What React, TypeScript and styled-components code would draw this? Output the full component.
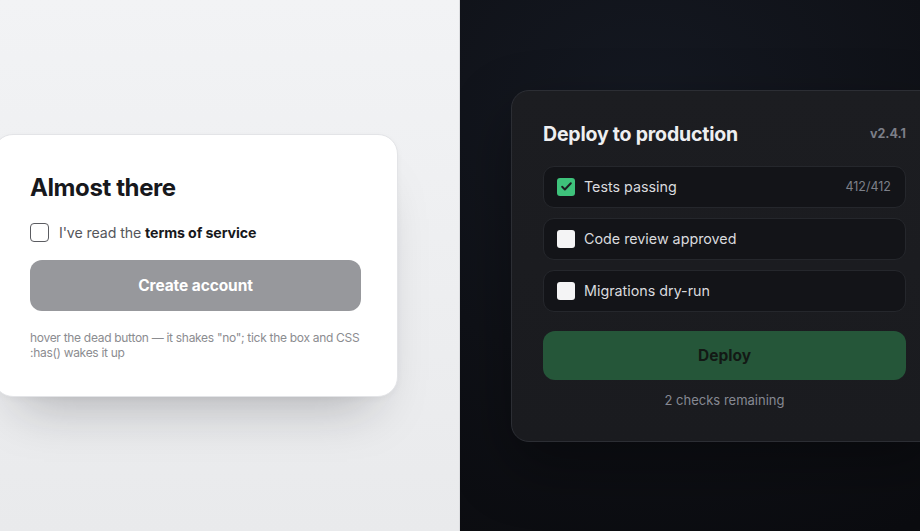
import React from 'react';
import styled, { createGlobalStyle } from 'styled-components';

const GlobalStyle = createGlobalStyle`
  html, body {
    margin: 0;
    padding: 0;
    overflow: hidden;
  }
  body {
    font-family: Inter, "Liberation Sans", sans-serif;
    -webkit-font-smoothing: antialiased;
  }
`;

const Split = styled.div`
  display: grid;
  grid-template-columns: 460px 460px;
  width: 920px;
  height: 531px;
  overflow: hidden;
`;

const LightPane = styled.section`
  display: flex;
  align-items: center;
  background: linear-gradient(180deg, #f2f3f5 0%, #e9eaec 100%);
  border-right: 1px solid #dcdde0;
  overflow: hidden;
`;

const DarkPane = styled.section`
  display: flex;
  align-items: center;
  padding-left: 51px;
  background: radial-gradient(120% 90% at 40% 20%, #141821 0%, #0f1117 55%, #0b0c10 100%);
  overflow: hidden;
`;

const SignupCard = styled.div`
  flex: none;
  width: 405px;
  box-sizing: border-box;
  margin-left: -7px;
  padding: 39px 36px 36px;
  background: #ffffff;
  border: 1px solid #e3e4e7;
  border-radius: 20px;
  box-shadow: 0 34px 50px -26px rgba(20, 22, 30, 0.28), 0 2px 6px rgba(20, 22, 30, 0.04);
`;

const Title = styled.h1`
  margin: 0 0 20px;
  font-size: 24px;
  line-height: 28px;
  font-weight: 700;
  letter-spacing: -0.4px;
  color: #17181c;
`;

const AgreeRow = styled.label`
  display: flex;
  align-items: center;
  gap: 10px;
  height: 20px;
  margin-bottom: 18px;
  font-size: 14.2px;
  color: #55565b;
  letter-spacing: -0.1px;

  b {
    color: #17181c;
    font-weight: 700;
  }
`;

const LightBox = styled.span`
  width: 19px;
  height: 19px;
  box-sizing: border-box;
  border: 1.5px solid #5b5c61;
  border-radius: 4px;
  flex: none;
`;

const DeadButton = styled.button`
  display: block;
  width: 100%;
  height: 51px;
  border: none;
  border-radius: 12px;
  background: #97989c;
  color: #ffffff;
  font-family: inherit;
  font-size: 15.5px;
  font-weight: 700;
  letter-spacing: -0.1px;
  cursor: not-allowed;
`;

const Hint = styled.p`
  margin: 19px 0 0;
  font-size: 12px;
  line-height: 15px;
  color: #8b8c90;
  letter-spacing: -0.3px;
`;

const DeployCard = styled.div`
  flex: none;
  width: 427px;
  box-sizing: border-box;
  padding: 30px 31px 32px;
  background: linear-gradient(180deg, #1c1d21 0%, #1a1b1f 100%);
  border: 1px solid #2c2e34;
  border-radius: 18px;
  box-shadow: 0 24px 60px rgba(0, 0, 0, 0.35);
`;

const Header = styled.div`
  display: flex;
  align-items: center;
  justify-content: space-between;
  height: 26px;
  margin-bottom: 19px;
`;

const DeployTitle = styled.h2`
  margin: 0;
  font-size: 19.5px;
  font-weight: 700;
  letter-spacing: -0.2px;
  color: #eeeff1;
`;

const Version = styled.span`
  font-size: 12.5px;
  font-weight: 700;
  color: #7c7f88;
`;

const Checks = styled.ul`
  display: flex;
  flex-direction: column;
  gap: 10px;
  margin: 0 0 19px;
  padding: 0;
  list-style: none;
`;

const CheckRow = styled.li`
  display: flex;
  align-items: center;
  gap: 9px;
  height: 42px;
  box-sizing: border-box;
  padding: 0 14px 0 13px;
  background: #131418;
  border: 1px solid #25272c;
  border-radius: 11px;
  font-size: 14.3px;
  color: #d9dade;
`;

const DarkBox = styled.span<{ $done: boolean }>`
  display: flex;
  align-items: center;
  justify-content: center;
  width: 18px;
  height: 18px;
  flex: none;
  border-radius: 3px;
  background: ${p => (p.$done ? '#3ec27b' : '#f4f4f5')};
`;

const RowLabel = styled.span`
  flex: 1;
`;

const Count = styled.span`
  font-size: 12.5px;
  color: #7d8089;
`;

const DeployButton = styled.button`
  display: block;
  width: 100%;
  height: 49px;
  border: none;
  border-radius: 12px;
  background: #255639;
  color: #131915;
  font-family: inherit;
  font-size: 15.5px;
  font-weight: 700;
  cursor: not-allowed;
`;

const Remaining = styled.p`
  margin: 11px 0 0;
  text-align: center;
  font-size: 13px;
  line-height: 18px;
  color: #868993;
`;

const checks = [
  { label: 'Tests passing', done: true, count: '412/412' },
  { label: 'Code review approved', done: false },
  { label: 'Migrations dry-run', done: false },
];

const Tick = () => (
  <svg width="13" height="13" viewBox="0 0 24 24" fill="none">
    <path d="M4 12.5l5 5L20 6" stroke="#1c1e22" strokeWidth="3.6" strokeLinecap="round" strokeLinejoin="round" />
  </svg>
);

const App: React.FC = () => {
  const remaining = checks.filter(c => !c.done).length;

  return (
    <>
      <GlobalStyle />
      <Split>
        <LightPane>
          <SignupCard>
            <Title>Almost there</Title>
            <AgreeRow>
              <LightBox />
              <span>
                I've read the <b>terms of service</b>
              </span>
            </AgreeRow>
            <DeadButton>Create account</DeadButton>
            <Hint>
              hover the dead button — it shakes "no"; tick the box and CSS :has() wakes it up
            </Hint>
          </SignupCard>
        </LightPane>

        <DarkPane>
          <DeployCard>
            <Header>
              <DeployTitle>Deploy to production</DeployTitle>
              <Version>v2.4.1</Version>
            </Header>
            <Checks>
              {checks.map(item => (
                <CheckRow key={item.label}>
                  <DarkBox $done={item.done}>{item.done && <Tick />}</DarkBox>
                  <RowLabel>{item.label}</RowLabel>
                  {item.count && <Count>{item.count}</Count>}
                </CheckRow>
              ))}
            </Checks>
            <DeployButton>Deploy</DeployButton>
            <Remaining>{remaining} checks remaining</Remaining>
          </DeployCard>
        </DarkPane>
      </Split>
    </>
  );
};

export default App;
